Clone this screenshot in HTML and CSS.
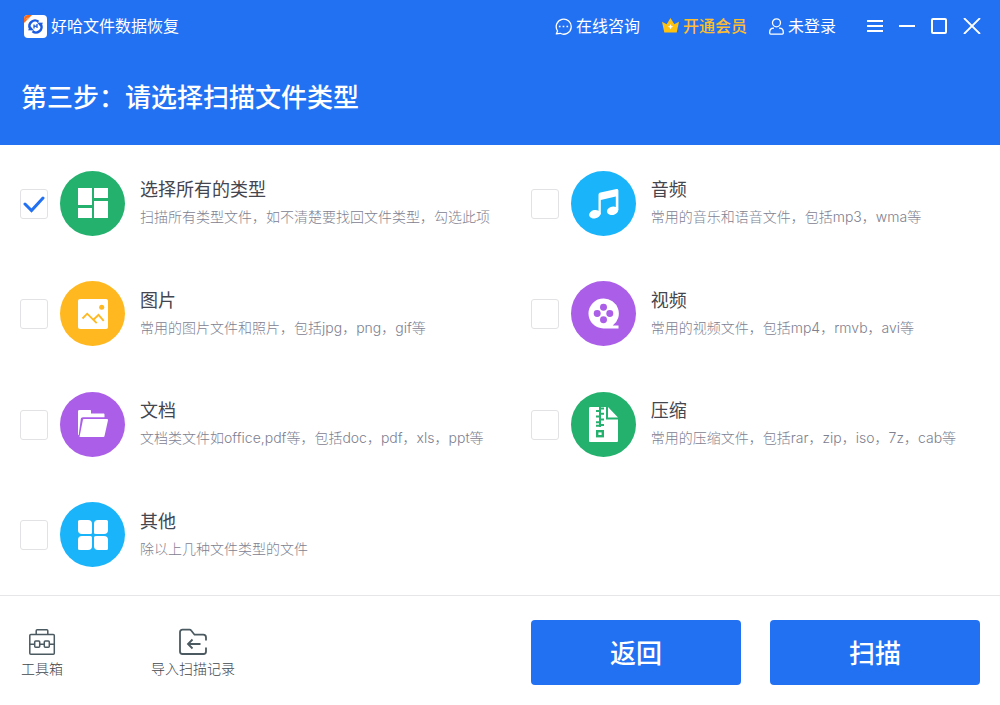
FILE: index.html
```html
<!DOCTYPE html>
<html lang="zh-CN">
<head>
    <meta charset="UTF-8" />
    <meta name="viewport" content="width=device-width, initial-scale=1.0" />
    <title>好哈文件数据恢复</title>
    <link rel="stylesheet" href="styles.css">
</head>
<body>
    <header class="header">
        <div class="topbar">
            <div class="brand">
                <svg class="logo" width="23" height="23" viewBox="0 0 23 23">
                    <rect width="23" height="23" rx="4" fill="#fff"/>
                    <path d="M0 8V4a4 4 0 0 1 4-4h4z" fill="#ff6a13"/>
                    <path d="M2 4.500l2-2M3.500 5l1.500-1.500" stroke="#ffd2b0" stroke-width=".8"/>
                    <path d="M6 13.500A5.600 5.600 0 0 1 14.500 6.700M17 9.500a5.600 5.600 0 0 1-8.500 6.800" fill="none" stroke="#1a5be0" stroke-width="2.400"/>
                    <path d="M13 7.500l6 .2-2.500 4zM10 15.500l-6-.2 2.500-4z" fill="#1a5be0"/>
                    <path d="M10 9.500v4M13 9v4M10 11.600l3-.8" fill="none" stroke="#1a5be0" stroke-width="1.300"/>
                </svg>
                <span>好哈文件数据恢复</span>
            </div>
            <nav class="links">
                <a href="#" class="link chat">
                    <svg width="17" height="17" viewBox="0 0 17 17" fill="none" stroke="#fff" stroke-width="1.300">
                        <path d="M1.300 15.900L2.600 13A7.500 7.500 0 1 1 5.200 15.300z" stroke-linejoin="round"/>
                        <path d="M3.900 8.500h1.600M7.700 8.500h1.600M11.500 8.500h1.600" stroke-width="1.600"/>
                    </svg>
                    在线咨询
                </a>
                <a href="#" class="link vip">
                    <svg width="17" height="16" viewBox="0 0 17 16">
                        <path d="M0 3.800l4.700 2.500L8.500 0l3.800 6.300L17 3.800 14.700 14.500H2.300z" fill="#ffc20e"/>
                        <path d="M8.500 6l.8 2 2 .8-2 .8-.8 2-.8-2-2-.8 2-.8z" fill="#fff"/>
                    </svg>
                    开通会员
                </a>
                <a href="#" class="link user">
                    <svg width="15" height="17" viewBox="0 0 15 17" fill="none" stroke="#fff" stroke-width="1.300">
                        <circle cx="7.500" cy="4.800" r="4"/>
                        <path d="M5 10.200H4.500C2 10.200.7 11.800.7 14.200v.9c0 .7.300 1 1 1h11.600c.7 0 1-.3 1-1v-.9c0-2.400-1.300-4-3.800-4H10"/>
                    </svg>
                    未登录
                </a>
            </nav>
            <div class="window-controls">
                <button type="button" aria-label="菜单">
                    <svg width="16" height="16" viewBox="0 0 16 16" stroke="#fff" stroke-width="2"><path d="M0 3h16M0 8h16M0 13h16"/></svg>
                </button>
                <button type="button" aria-label="最小化">
                    <svg width="16" height="16" viewBox="0 0 16 16" stroke="#fff" stroke-width="2"><path d="M0 8h16"/></svg>
                </button>
                <button type="button" aria-label="最大化">
                    <svg width="16" height="16" viewBox="0 0 16 16" stroke="#fff" stroke-width="2" fill="none"><rect x="1" y="1" width="14" height="14" rx="1"/></svg>
                </button>
                <button type="button" aria-label="关闭">
                    <svg width="18" height="16" viewBox="0 0 18 16" stroke="#fff" stroke-width="1.800"><path d="M1 0l16 16M17 0L1 16"/></svg>
                </button>
            </div>
        </div>
        <h1 class="step-title">第三步：请选择扫描文件类型</h1>
    </header>

    <main class="types">
        <label class="type">
            <input type="checkbox" class="check" checked>
            <span class="icon green">
                <svg width="30" height="30" viewBox="0 0 30 30" fill="#fff"><path d="M0 0h14v17H0zM16 0h14v10H16zM0 20h14v10H0zM16 13h14v17H16z"/></svg>
            </span>
            <span class="info">
                <span class="name">选择所有的类型</span>
                <span class="desc">扫描所有类型文件，如不清楚要找回文件类型，勾选此项</span>
            </span>
        </label>
        <label class="type">
            <input type="checkbox" class="check">
            <span class="icon blue">
                <svg width="31" height="31" viewBox="0 0 31 31" fill="#fff">
                    <path d="M10.500 7c0-1.500.8-2.300 2-2.600L28.500 1c1-.2 1.900.4 1.900 1.500V22h-2.600V8.500L12.800 12v14.500h-2.300z"/>
                    <ellipse cx="6.800" cy="26.200" rx="5.700" ry="4.200" transform="rotate(-12 6.800 26.200)"/>
                    <ellipse cx="24.600" cy="22.800" rx="5.700" ry="4.200" transform="rotate(-12 24.600 22.800)"/>
                </svg>
            </span>
            <span class="info">
                <span class="name">音频</span>
                <span class="desc">常用的音乐和语音文件，包括mp3，wma等</span>
            </span>
        </label>
        <label class="type">
            <input type="checkbox" class="check">
            <span class="icon yellow">
                <svg width="30" height="30" viewBox="0 0 30 30">
                    <rect width="30" height="30" rx="2" fill="#fff"/>
                    <circle cx="23.700" cy="8.300" r="2.500" fill="#ffb81f"/>
                    <path d="M4.500 19.500l4.700-4.800 9.500 9.500M15.700 20.500l4.800-4.700 5.200 6" fill="none" stroke="#ffb81f" stroke-width="1.800"/>
                </svg>
            </span>
            <span class="info">
                <span class="name">图片</span>
                <span class="desc">常用的图片文件和照片，包括jpg，png，gif等</span>
            </span>
        </label>
        <label class="type">
            <input type="checkbox" class="check">
            <span class="icon purple">
                <svg width="31" height="31" viewBox="0 0 32 32">
                    <path d="M16 .5A15.500 15.500 0 0 1 25.500 28.500H31.500v3H16A15.500 15.500 0 0 1 16 .5z" fill="#fff"/>
                    <g fill="#ab5ee8"><circle cx="16" cy="9.500" r="3.600"/><circle cx="9.500" cy="16" r="3.600"/><circle cx="22.500" cy="16" r="3.600"/><circle cx="16" cy="22.500" r="3.600"/></g>
                </svg>
            </span>
            <span class="info">
                <span class="name">视频</span>
                <span class="desc">常用的视频文件，包括mp4，rmvb，avi等</span>
            </span>
        </label>
        <label class="type">
            <input type="checkbox" class="check">
            <span class="icon purple">
                <svg width="30" height="28" viewBox="0 0 30 28" fill="#fff">
                    <path d="M0 1.500C0 .5.500 0 1.500 0H12c.8 0 1 .4 1 1v2.500h12.500c.6 0 1 .4 1 1v2.700H5C3.500 7.200 3 8 2.800 9L.7 25H0z"/>
                    <path d="M6.200 9H29c.8 0 1.100.4 1 1.200L26.500 26c-.2.800-.5 1-1.200 1H1.500L4.900 10c.1-.7.500-1 1.300-1z"/>
                </svg>
            </span>
            <span class="info">
                <span class="name">文档</span>
                <span class="desc">文档类文件如office,pdf等，包括doc，pdf，xls，ppt等</span>
            </span>
        </label>
        <label class="type">
            <input type="checkbox" class="check">
            <span class="icon green">
                <svg width="29" height="35" viewBox="0 0 29 35">
                    <path d="M1.500 0H17v12.500h12v21c0 1-.5 1.500-1.500 1.500h-26C.5 35 0 34.500 0 33.500v-32C0 .5.500 0 1.500 0zM19 0l10 10.500H19z" fill="#fff"/>
                    <path d="M11 0v20M7 4h4M11 6.800h4M7 9.600h4M11 12.400h4M7 15.200h4M11 18h4M7 18.800h4M11 1.500h4" stroke="#23b16d" stroke-width="2"/>
                    <rect x="8.200" y="24.200" width="5.600" height="5" fill="none" stroke="#23b16d" stroke-width="2.400"/>
                </svg>
            </span>
            <span class="info">
                <span class="name">压缩</span>
                <span class="desc">常用的压缩文件，包括rar，zip，iso，7z，cab等</span>
            </span>
        </label>
        <label class="type">
            <input type="checkbox" class="check">
            <span class="icon blue">
                <svg width="30" height="30" viewBox="0 0 30 30" fill="#fff">
                    <path d="M1.500 0H10a4 4 0 0 1 4 4v8.500q0 1.500-1.500 1.500H4a4 4 0 0 1-4-4V1.500Q0 0 1.500 0z"/>
                    <path d="M20 0h8.500Q30 0 30 1.500V10a4 4 0 0 1-4 4h-8.500q-1.500 0-1.500-1.500V4a4 4 0 0 1 4-4z"/>
                    <path d="M4 16h8.500q1.500 0 1.500 1.500V26a4 4 0 0 1-4 4H1.500Q0 30 0 28.500V20a4 4 0 0 1 4-4z"/>
                    <path d="M17.500 16H26a4 4 0 0 1 4 4v8.500q0 1.500-1.500 1.500H20a4 4 0 0 1-4-4v-8.500q0-1.500 1.500-1.500z"/>
                </svg>
            </span>
            <span class="info">
                <span class="name">其他</span>
                <span class="desc">除以上几种文件类型的文件</span>
            </span>
        </label>
    </main>

    <footer class="footer">
        <div class="tools">
            <button type="button" class="tool">
                <svg width="28" height="28" viewBox="0 0 28 28" fill="none" stroke="#4b5960" stroke-width="1.500">
                    <rect x="1.800" y="6.500" width="24.500" height="19.700" rx="1"/>
                    <path d="M8.200 6.500V2.700q0-1 1-1h9.600q1 0 1 1v3.800M1.800 16.200h4.700M12 16.200h4M21.500 16.200h4.800"/>
                    <rect x="6.700" y="13" width="5" height="6.300" rx="1"/>
                    <rect x="16.300" y="13" width="5" height="6.300" rx="1"/>
                </svg>
                工具箱
            </button>
            <button type="button" class="tool">
                <svg width="28" height="28" viewBox="0 0 28 28" fill="none" stroke="#4b5960" stroke-width="1.800">
                    <path d="M27 12.500V9.500q0-2.800-2.800-2.800h-8.700l-3.300-4.200q-.6-.8-1.600-.8H3.500Q1 1.700 1 4.200v19.300q0 2.500 2.500 2.500h21q2.500 0 2.500-2.500v-4"/>
                    <path d="M21.500 16H8.500M13.500 11.500L9 16l4.500 4.500"/>
                </svg>
                导入扫描记录
            </button>
        </div>
        <div class="actions">
            <button type="button" class="btn">返回</button>
            <button type="button" class="btn">扫描</button>
        </div>
    </footer>
</body>
</html>
```
FILE: styles.css
```css
* {
    box-sizing: border-box;
}
body {
    margin: 0;
    min-height: 100vh;
    display: flex;
    flex-direction: column;
    font-family: Inter, "Noto Sans CJK SC", sans-serif;
    font-size: 16px;
    background-color: #fff;
    color: #44464f;
}
button {
    padding: 0;
    border: none;
    background: none;
    font-family: inherit;
    cursor: pointer;
}
svg {
    display: block;
    flex-shrink: 0;
}

/* header */
.header {
    height: 145px;
    background-color: #2371f3;
    color: #fff;
}
.topbar {
    display: flex;
    align-items: center;
    height: 52px;
    padding: 0 19px 0 24px;
    line-height: 24px;
}
.brand {
    display: flex;
    align-items: center;
    gap: 4px;
    margin-right: auto;
}
.links {
    display: flex;
    gap: 22px;
}
.link {
    display: flex;
    align-items: center;
    gap: 4px;
    color: #fff;
    text-decoration: none;
}
.vip {
    color: #ffbe2e;
    font-weight: 500;
}
.window-controls {
    display: flex;
    gap: 16px;
    margin-left: 31px;
}
.step-title {
    margin: 0;
    padding: 26px 21px;
    font-size: 26px;
    line-height: 40px;
    font-weight: 500;
}

/* file types */
.types {
    flex: 1;
    display: grid;
    grid-template-columns: 53.2% 1fr;
    grid-template-rows: repeat(4, 1fr);
    align-items: center;
    padding: 3px 20px 5px;
}
.type {
    display: flex;
    align-items: center;
    cursor: pointer;
}
.check {
    appearance: none;
    flex-shrink: 0;
    width: 28px;
    height: 30px;
    margin: 1px 12px 0 0;
    border: 1px solid #e2e2e4;
    border-radius: 3px;
    background: #fff center no-repeat;
}
.check:checked {
    background-image: url("data:image/svg+xml,%3Csvg xmlns='http://www.w3.org/2000/svg' width='22' height='18' viewBox='0 0 22 18'%3E%3Cpath d='M2 9l6.500 6.500L20 3' fill='none' stroke='%232371f3' stroke-width='3' stroke-linecap='round'/%3E%3C/svg%3E");
}
.icon {
    display: flex;
    align-items: center;
    justify-content: center;
    flex-shrink: 0;
    width: 65px;
    height: 65px;
    margin-right: 15px;
    border-radius: 50%;
}
.green {
    background-color: #23b16d;
}
.blue {
    background-color: #1ab4fa;
}
.yellow {
    background-color: #ffb81f;
}
.purple {
    background-color: #ab5ee8;
}
.info {
    display: flex;
    flex-direction: column;
}
.name {
    font-size: 18px;
    line-height: 28px;
}
.desc {
    font-size: 14px;
    line-height: 26px;
    font-weight: 300;
    color: #7e8190;
}

/* footer */
.footer {
    display: flex;
    align-items: center;
    justify-content: space-between;
    height: 110px;
    padding: 4px 20px 0 21px;
    border-top: 1px solid #e6e6e8;
}
.tools {
    display: flex;
    gap: 88px;
    padding-top: 2px;
}
.tool {
    display: flex;
    flex-direction: column;
    align-items: center;
    gap: 2px;
    font-size: 14px;
    line-height: 22px;
    font-weight: 300;
    color: #3f474c;
}
.actions {
    display: flex;
    gap: 29px;
}
.btn {
    width: 210px;
    height: 65px;
    padding-bottom: 2px;
    border-radius: 4px;
    background-color: #2371f3;
    color: #fff;
    font-size: 26px;
    font-weight: 500;
}
.btn:hover {
    background-color: #3b81f5;
}
```
